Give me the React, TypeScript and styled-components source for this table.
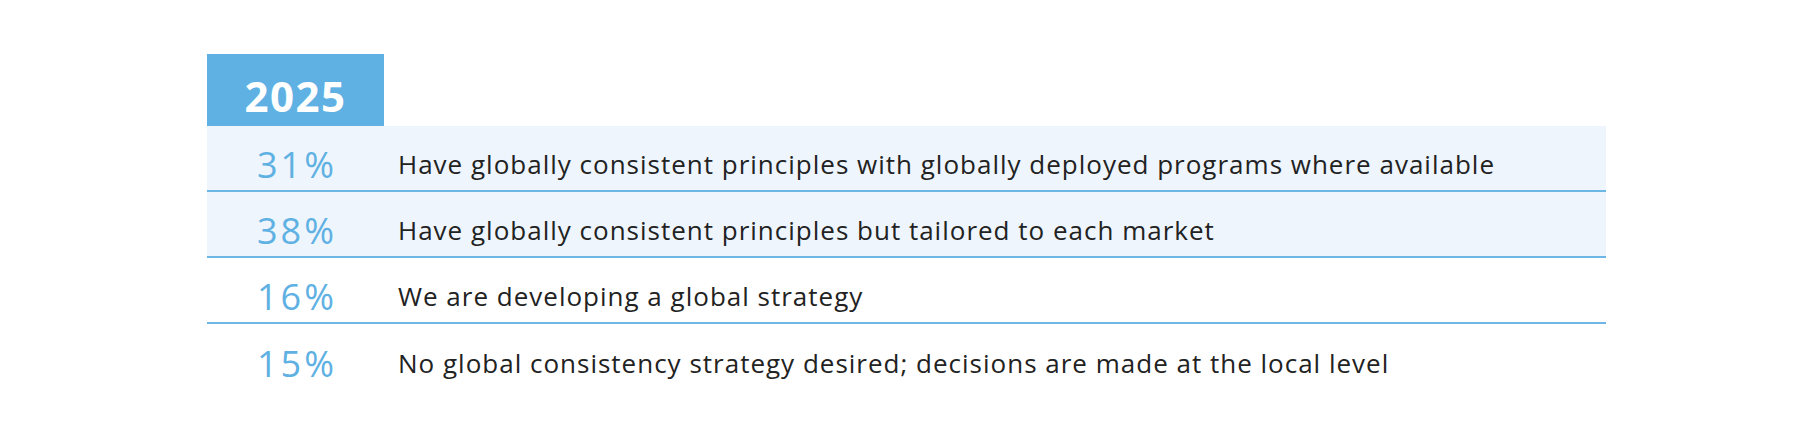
import React from 'react';
import styled, { createGlobalStyle } from 'styled-components';

const GlobalStyle = createGlobalStyle`
  body {
    margin: 0;
    background: #ffffff;
    font-family: "Open Sans", "Noto Sans", sans-serif;
  }
`;

const Page = styled.div`
  width: 1800px;
  height: 440px;
  padding: 54px 0 0 207px;
  box-sizing: border-box;
`;

const Table = styled.div`
  width: 1399px;
`;

const YearTab = styled.div`
  width: 177px;
  height: 72px;
  background: #60b1e3;
  color: #ffffff;
  font-weight: 700;
  font-size: 42px;
  letter-spacing: 1.5px;
  display: flex;
  align-items: center;
  justify-content: center;
  padding-top: 10px;
  box-sizing: border-box;
`;

const Row = styled.div<{ $shaded: boolean; $last: boolean }>`
  display: grid;
  grid-template-columns: 177px 1fr;
  column-gap: 14px;
  align-items: center;
  height: 66px;
  padding-top: 12px;
  box-sizing: border-box;
  background: ${(p) => (p.$shaded ? '#eef5fc' : '#ffffff')};
  border-bottom: ${(p) => (p.$last ? 'none' : '2px solid #6cb7e6')};
`;

const Percent = styled.div`
  text-align: center;
  color: #5fb1e3;
  font-size: 36px;
  font-weight: 400;
  letter-spacing: 3px;
  padding-left: 3px;
`;

const Label = styled.div`
  color: #222222;
  font-size: 26px;
  font-weight: 400;
  letter-spacing: 1px;
`;

const rows = [
  { pct: '31%', text: 'Have globally consistent principles with globally deployed programs where available' },
  { pct: '38%', text: 'Have globally consistent principles but tailored to each market' },
  { pct: '16%', text: 'We are developing a global strategy' },
  { pct: '15%', text: 'No global consistency strategy desired; decisions are made at the local level' },
];

export default function App() {
  return (
    <>
      <GlobalStyle />
      <Page>
        <Table>
          <YearTab>2025</YearTab>
          {rows.map((r, i) => (
            <Row key={r.pct} $shaded={i < 2} $last={i === rows.length - 1}>
              <Percent>{r.pct}</Percent>
              <Label>{r.text}</Label>
            </Row>
          ))}
        </Table>
      </Page>
    </>
  );
}
